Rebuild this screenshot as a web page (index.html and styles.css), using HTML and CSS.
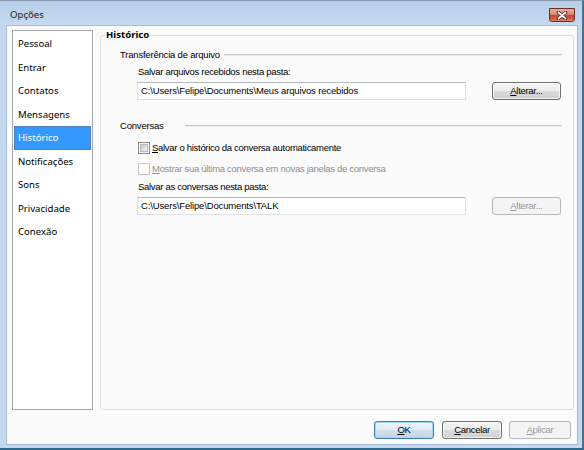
FILE: index.html
```html
<!DOCTYPE html>
<html lang="pt">
<head>
<meta charset="utf-8">
<title>Opções</title>
<link rel="stylesheet" href="styles.css">
</head>
<body>
<div class="window">
  <div class="titlebar">
    <span class="title">Opções</span>
    <div class="close">
      <svg width="12" height="9" viewBox="0 0 12 9">
        <path d="M2.5 1.5 L9.5 7.5 M9.5 1.5 L2.5 7.5" stroke="#5a2a24" stroke-width="3.6" stroke-linecap="round" fill="none"/>
        <path d="M2.5 1.5 L9.5 7.5 M9.5 1.5 L2.5 7.5" stroke="#ffffff" stroke-width="1.8" stroke-linecap="round" fill="none"/>
      </svg>
    </div>
  </div>
  <div class="frame">
    <div class="client">
      <div class="main">
        <ul class="nav">
          <li class="nav-item">Pessoal</li>
          <li class="nav-item">Entrar</li>
          <li class="nav-item">Contatos</li>
          <li class="nav-item">Mensagens</li>
          <li class="nav-item selected">Histórico</li>
          <li class="nav-item">Notificações</li>
          <li class="nav-item">Sons</li>
          <li class="nav-item">Privacidade</li>
          <li class="nav-item">Conexão</li>
        </ul>
        <div class="group">
          <div class="group-title">Histórico</div>

          <div class="section-head first">
            <span class="section-label">Transferência de arquivo</span>
            <span class="sep sep-a"></span>
          </div>
          <div class="label first-label">Salvar arquivos recebidos nesta pasta:</div>
          <div class="field-row">
            <div class="textbox">C:\Users\Felipe\Documents\Meus arquivos recebidos</div>
            <div class="btn"><span class="u">A</span>lterar...</div>
          </div>

          <div class="section-head second">
            <span class="section-label conv-label">Conversas</span>
            <span class="sep"></span>
          </div>
          <div class="check-row row1">
            <span class="checkbox"><span class="check-inner"></span></span>
            <span class="check-label"><span class="u">S</span>alvar o histórico da conversa automaticamente</span>
          </div>
          <div class="check-row row2 disabled">
            <span class="checkbox"></span>
            <span class="check-label"><span class="u">M</span>ostrar sua última conversa em novas janelas de conversa</span>
          </div>
          <div class="label second-label">Salvar as conversas nesta pasta:</div>
          <div class="field-row">
            <div class="textbox">C:\Users\Felipe\Documents\TALK</div>
            <div class="btn btn-disabled"><span class="u">A</span>lterar...</div>
          </div>
        </div>
      </div>
      <div class="buttons">
        <div class="btn dlg btn-default"><span class="u">O</span>K</div>
        <div class="btn dlg btn-cancel"><span class="u">C</span>ancelar</div>
        <div class="btn dlg btn-apply btn-disabled"><span class="u">A</span>plicar</div>
      </div>
    </div>
  </div>
</div>
</body>
</html>
```
FILE: styles.css
```css
* { box-sizing: border-box; }
html, body { margin: 0; padding: 0; }
body { width: 584px; height: 450px; overflow: hidden; background: #c3d7ee; }

.window {
  width: 584px;
  height: 450px;
  display: flex;
  flex-direction: column;
  background: #c4d8ef;
  border-top: 1px solid #8a9bb0;
  border-right: 2px solid #4a6e8e;
  border-bottom: 2px solid #2f6a8a;
}

.titlebar {
  height: 25px;
  display: flex;
  justify-content: space-between;
  align-items: flex-start;
  background: linear-gradient(to bottom, #b7cee8 0%, #c0d5ed 60%, #c6daf0 100%);
  flex: none;
}
.title {
  margin: 7px 0 0 10px;
  font-family: "Noto Sans", sans-serif;
  font-size: 9.6px;
  line-height: 14px;
  color: #1b1b1b;
}
.close {
  margin: 7px 7px 0 0;
  width: 26px;
  height: 14px;
  border: 1px solid #6a2c24;
  border-radius: 0 0 3px 3px;
  background: linear-gradient(to bottom, #e9b0a2 0%, #dc8a76 45%, #c4452f 50%, #cf5840 80%, #e08a6c 100%);
  display: flex;
  align-items: center;
  justify-content: center;
}
.close svg { display: block; }

.frame {
  flex: 1;
  padding: 0 5px 4px 7px;
  display: flex;
}
.client {
  flex: 1;
  background: #fbfbfb;
  box-shadow: 0 0 0 1px #a9bed6;
  display: flex;
  flex-direction: column;
  padding: 4px 3px 5px 5px;
}

.main {
  display: flex;
  height: 380px;
  gap: 7px;
}

.nav {
  list-style: none;
  margin: 0;
  padding: 1px 0 0 0;
  width: 81px;
  height: 380px;
  border: 1px solid #a4a9af;
  background: #ffffff;
  font-family: "Noto Sans", sans-serif;
  font-size: 9.6px;
  color: #000;
}
.nav-item {
  height: 23.5px;
  line-height: 21.5px;
  margin: 0 1px;
  padding-left: 3px;
  border: 1px solid transparent;
}
.nav-item.selected {
  background: #3399ff;
  border-color: #4f80b8;
  color: #ffffff;
}

.group {
  margin-top: 5px;
  width: 474px;
  height: 375px;
  border: 1px solid #d5dfe5;
  border-radius: 3px;
  font-family: "Liberation Sans", Arial, sans-serif;
  font-size: 9.5px;
  letter-spacing: -0.3px;
  color: #000;
}
.group-title {
  margin: -7px 0 0 4px;
  padding: 0 1px;
  width: fit-content;
  background: #fbfbfb;
  font-family: "Noto Sans", sans-serif;
  font-weight: bold;
  font-size: 9.6px;
  letter-spacing: 0;
  line-height: 12px;
}

.section-head {
  display: flex;
  align-items: center;
  height: 14px;
  padding-left: 19px;
  padding-right: 11px;
}
.section-head.first { margin-top: 7px; }
.section-head.second { margin-top: 19px; }
.section-label { line-height: 14px; white-space: nowrap; letter-spacing: -0.2px; }
.conv-label { width: 65px; }
.sep {
  flex: 1;
  height: 2px;
  border-top: 1px solid #c9c9c9;
  border-bottom: 1px solid #ececec;
  margin-left: 0;
}
.sep-a { margin-left: 4px; }

.label {
  line-height: 14px;
  padding-left: 37px;
  white-space: nowrap;
}
.first-label { margin-top: 3px; }
.second-label { margin-top: 4px; }

.field-row {
  display: flex;
  margin-top: 3px;
  padding-left: 36px;
}
.textbox {
  width: 329px;
  height: 18px;
  line-height: 16px;
  padding-left: 3px;
  background: #ffffff;
  border: 1px solid #dbdfe6;
  border-top-color: #b5b8bd;
  white-space: nowrap;
  letter-spacing: -0.15px;
}

.btn {
  margin-left: 26px;
  width: 69px;
  height: 18px;
  line-height: 16px;
  text-align: center;
  border: 1px solid #707070;
  border-radius: 3px;
  background: linear-gradient(to bottom, #f4f4f4 0%, #ececec 48%, #dcdcdc 52%, #cfcfcf 100%);
  box-shadow: inset 0 0 0 1px rgba(255,255,255,0.7);
  font-family: "Liberation Sans", Arial, sans-serif;
  font-size: 9.5px;
  letter-spacing: -0.3px;
  color: #000;
}
.btn-disabled {
  border-color: #b5b9bc;
  background: #f4f4f4;
  box-shadow: none;
  color: #9a9a9a;
}
.u { text-decoration: underline; }

.check-row {
  display: flex;
  align-items: center;
  height: 14px;
  padding-left: 37px;
}
.row1 { margin-top: 8px; }
.row2 { margin-top: 7px; }
.checkbox {
  width: 12px;
  height: 12px;
  border: 1px solid #8e8f8f;
  background: #f4f4f4;
  display: flex;
  align-items: center;
  justify-content: center;
  flex: none;
}
.check-inner {
  width: 8px;
  height: 8px;
  border: 1px solid #b9b9b9;
  background: linear-gradient(135deg, #c9c9c9 0%, #e4e4e4 60%, #f4f4f4 100%);
}
.check-label {
  margin-left: 2px;
  white-space: nowrap;
  line-height: 14px;
}
.disabled .checkbox {
  border-color: #c6c6c6;
  background: #fcfcfc;
}
.disabled .check-label { color: #8f8f8f; }

.buttons {
  margin-top: 11px;
  height: 18px;
  display: flex;
  justify-content: flex-end;
  padding-right: 3px;
}
.dlg { margin-left: 0; width: 60px; }
.btn-default {
  border-color: #3c7fb1;
  background: linear-gradient(to bottom, #eef4f9 0%, #e2ebf3 48%, #d3dfeb 52%, #c6d6e6 100%);
  box-shadow: inset 0 0 0 1px #9fd8f2;
}
.btn-cancel { margin-left: 8px; }
.btn-apply { margin-left: 7px; width: 62px; }
```
